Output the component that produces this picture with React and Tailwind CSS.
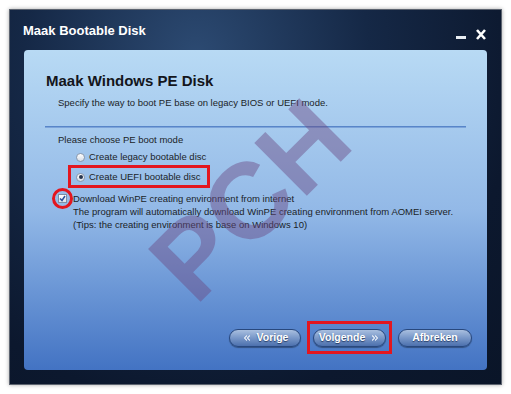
import React from 'react';
import { ChevronsLeft, ChevronsRight } from 'lucide-react';

const font = "font-['Liberation_Sans',Arial,sans-serif]";

const PillButton = ({ children, className = '' }) => (
    <button
        className={`h-[18px] rounded-full border border-[#28487e] bg-gradient-to-b from-[#a9bfdf] via-[#7897c8] to-[#4c70ad] text-white text-[10.5px] font-bold flex items-center justify-center gap-[5px] shadow-[0_1px_1px_rgba(0,0,0,0.35)] [text-shadow:0_1px_1px_rgba(20,40,80,0.8)] ${className}`}
    >
        {children}
    </button>
);

const Radio = ({ checked }) => (
    <span className="w-[9px] h-[9px] rounded-full border border-[#8a98ad] bg-gradient-to-b from-[#ffffff] to-[#d5dce6] flex items-center justify-center shrink-0">
        {checked && <span className="w-[4px] h-[4px] rounded-full bg-[#27364f]" />}
    </span>
);

export default function App() {
    return (
        <div className={`w-[511px] h-[394px] bg-white p-[9px] ${font}`}>
            <div className="w-[493px] h-[376px] flex flex-col border border-[#5d6470] bg-[radial-gradient(ellipse_at_38%_12%,#2c4a72_0%,#152846_40%,#0c182e_75%,#0a1528_100%)] shadow-[0_0_4px_rgba(0,0,0,0.35)]">
                {/* Title bar */}
                <div className="h-[40px] flex items-center justify-between pl-[13px] pr-[15px] pt-[1px]">
                    <span className="text-white text-[13px] font-bold">Maak Bootable Disk</span>
                    <div className="flex items-end gap-[10px] mt-[8px]">
                        <svg width="10" height="10" viewBox="0 0 10 10">
                            <rect x="0" y="6" width="10" height="3" fill="#e8edf3" />
                        </svg>
                        <svg width="10" height="11" viewBox="0 0 10 11">
                            <path d="M1 1 L9 10 M9 1 L1 10" stroke="#ffffff" strokeWidth="2.6" />
                        </svg>
                    </div>
                </div>

                {/* Content panel */}
                <div className="relative flex-1 mx-[14px] mb-[14px] rounded-[4px] flex flex-col overflow-hidden bg-gradient-to-b from-[#b8daf4] via-[#93b9e7] to-[#4373c3] text-[#1b1f28]">
                    <div className="pl-[22px] pr-[21px]">
                        <h1 className="mt-[22px] text-[15px] leading-[17px] font-bold text-[#14161c]">Maak Windows PE Disk</h1>
                        <p className="mt-[7px] ml-[12px] text-[9.5px] leading-[13px]">
                            Specify the way to boot PE base on legacy BIOS or UEFI mode.
                        </p>
                        <div className="mt-[17px] -ml-[1px] h-[2px] bg-gradient-to-b from-[#4676c0] to-[#8fb3e2]" />
                        <p className="mt-[5px] ml-[12px] text-[9.5px] leading-[13px]">Please choose PE boot mode</p>

                        <div className="mt-[3px] ml-[30px] h-[16px] flex items-center gap-[4px] text-[9.5px]">
                            <Radio />
                            <span>Create legacy bootable disc</span>
                        </div>
                        <div className="relative mt-[4px] ml-[30px] h-[16px] flex items-center gap-[4px] text-[9.5px]">
                            <Radio checked />
                            <span>Create UEFI bootable disc</span>
                            <div className="absolute left-[-8px] top-[-4px] w-[142px] h-[23px] border-[3px] border-[#e3161f]" />
                        </div>

                        <div className="mt-[7px] ml-[12px] flex gap-[6px] text-[9.5px] leading-[13px]">
                            <div className="relative w-[9px] h-[9px] mt-[2px] shrink-0 border border-[#7f8ea5] bg-gradient-to-b from-white to-[#dce3ec] flex items-center justify-center">
                                <svg width="7" height="7" viewBox="0 0 7 7">
                                    <path d="M1 3.5 L3 5.5 L6 1" stroke="#2a4f9a" strokeWidth="1.5" fill="none" />
                                </svg>
                                <div className="absolute left-[-7px] top-[-7px] w-[21px] h-[21px] rounded-full border-[3px] border-[#e3161f]" />
                            </div>
                            <div>
                                <p>Download WinPE creating environment from internet</p>
                                <p>The program will automatically download WinPE creating environment from AOMEI server.</p>
                                <p>(Tips: the creating environment is base on Windows 10)</p>
                            </div>
                        </div>
                    </div>

                    {/* Buttons */}
                    <div className="mt-auto flex justify-end items-center gap-[12px] pr-[15px] pb-[23px]">
                        <PillButton className="w-[72px]">
                            <ChevronsLeft size={10} strokeWidth={2.5} />
                            Vorige
                        </PillButton>
                        <div className="relative">
                            <PillButton className="w-[73px]">
                                Volgende
                                <ChevronsRight size={10} strokeWidth={2.5} />
                            </PillButton>
                            <div className="absolute -left-[6px] -right-[6px] -top-[8px] -bottom-[7px] border-[3px] border-[#e3161f]" />
                        </div>
                        <PillButton className="w-[74px]">Afbreken</PillButton>
                    </div>

                    {/* Watermark */}
                    <div className="absolute left-[226px] top-[150px] pointer-events-none">
                        <span className="absolute -translate-x-1/2 -translate-y-1/2 -rotate-45 text-[108px] leading-none font-bold text-[#6a4a82]/45 select-none">
                            PCH
                        </span>
                    </div>
                </div>
            </div>
        </div>
    );
}
